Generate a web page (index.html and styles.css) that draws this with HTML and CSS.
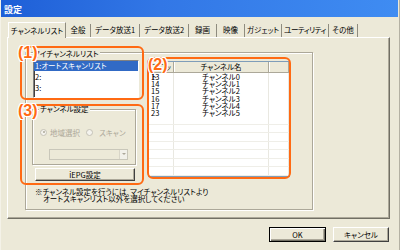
FILE: index.html
```html
<!DOCTYPE html>
<html lang="ja">
<head>
    <meta charset="UTF-8">
    <title>設定</title>
    <link rel="stylesheet" href="styles.css">
</head>
<body>
<div class="window">
    <div class="titlebar">設定</div>

    <!--タブ-->
    <div class="tabs">
        <div class="tab on t1">チャンネルリスト</div>
        <div class="tab t2">全般</div>
        <div class="tab t3">データ放送1</div>
        <div class="tab t3">データ放送2</div>
        <div class="tab t4">録画</div>
        <div class="tab t4">映像</div>
        <div class="tab t5">ガジェット</div>
        <div class="tab t6">ユーティリティ</div>
        <div class="tab t7">その他</div>
    </div>

    <!--タブの中身-->
    <div class="page">
        <div class="frame">
            <div class="left">
                <div class="head">
                    <span class="head-text">マイチャンネルリスト</span>
                    <span class="rule"></span>
                </div>
                <ul class="listbox">
                    <li class="sel">1:オートスキャンリスト</li>
                    <li>2:</li>
                    <li>3:</li>
                </ul>

                <div class="group">
                    <span class="legend">チャンネル設定</span>
                    <div class="radios">
                        <span class="radio checked"></span><span class="radio-label">地域選択</span>
                        <span class="radio r2"></span><span class="radio-label">スキャン</span>
                    </div>
                    <div class="combo"><span class="combo-btn"></span></div>
                </div>

                <div class="btn iepg">iEPG設定</div>

                <p class="note">※チャンネル設定を行うには、マイチャンネルリストより<br>オートスキャンリスト以外を選択してください</p>
            </div>

            <div class="listview">
                <div class="lv-head">
                    <span class="c1">スロット</span>
                    <span class="c2">チャンネル名</span>
                    <span class="c3"></span>
                </div>
                <div class="lv-body">
                    <div class="row"><span class="c1">13</span><span class="c2">チャンネル0</span><span class="c3"></span></div>
                    <div class="row"><span class="c1">14</span><span class="c2">チャンネル1</span><span class="c3"></span></div>
                    <div class="row"><span class="c1">15</span><span class="c2">チャンネル2</span><span class="c3"></span></div>
                    <div class="row"><span class="c1">16</span><span class="c2">チャンネル3</span><span class="c3"></span></div>
                    <div class="row"><span class="c1">17</span><span class="c2">チャンネル4</span><span class="c3"></span></div>
                    <div class="row"><span class="c1">23</span><span class="c2">チャンネル5</span><span class="c3"></span></div>
                    <div class="row"><span class="c1"></span><span class="c2"></span><span class="c3"></span></div>
                    <div class="row"><span class="c1"></span><span class="c2"></span><span class="c3"></span></div>
                    <div class="row"><span class="c1"></span><span class="c2"></span><span class="c3"></span></div>
                    <div class="row"><span class="c1"></span><span class="c2"></span><span class="c3"></span></div>
                    <div class="row"><span class="c1"></span><span class="c2"></span><span class="c3"></span></div>
                    <div class="row"><span class="c1"></span><span class="c2"></span><span class="c3"></span></div>
                    <div class="row"><span class="c1"></span><span class="c2"></span><span class="c3"></span></div>
                    <div class="row"><span class="c1"></span><span class="c2"></span><span class="c3"></span></div>
                </div>
            </div>
        </div>
    </div>

    <!--下のボタン-->
    <div class="buttons">
        <div class="btn default">OK</div>
        <div class="btn">キャンセル</div>
    </div>

    <!--注釈（オレンジの枠）-->
    <div class="mark box1"></div>
    <div class="mark box2"></div>
    <div class="mark box3"></div>
    <span class="num n1">(1)</span>
    <span class="num n2">(2)</span>
    <span class="num n3">(3)</span>
</div>
</body>
</html>
```

FILE: styles.css
```css
*{
    box-sizing: border-box;
}
body{
    margin: 0;
    font-family: "Noto Sans CJK JP", sans-serif;
    font-size: 7.5px;
    font-feature-settings: "palt";
    color: #000;
}
.window{
    position: relative;
    width: 400px;
    height: 250px;
    background: #ece9d8;
    border-right: 1px solid #b4b1a3;
    border-left: 1px solid #f4f2e8;
    overflow: hidden;
}
.titlebar{
    height: 17px;
    padding: 3px 0 0 3px;
    line-height: 14px;
    font-size: 9px;
    font-weight: bold;
    color: #fff;
    background: linear-gradient(90deg, #1e5fd7, #3277e6 40%, #3f8cf2);
    margin-right: 1px;
}

/* タブ */
.tabs{
    display: flex;
    align-items: flex-end;
    height: 20px;
    margin-left: 7px;
}
.tab{
    height: 13px;
    line-height: 12px;
    text-align: center;
    border-right: 1px solid #8f8c7f;
    white-space: nowrap;
}
.tab.on{
    height: 16px;
    line-height: 15px;
    border: 1px solid #fff;
    border-right: 1px solid #8f8c7f;
    border-bottom: none;
    background: #ece9d8;
    margin-bottom: -1px;
    position: relative;
    z-index: 1;
}
.t1{ width: 58px; }
.t2{ width: 25px; }
.t3{ width: 49px; }
.t4{ width: 28px; }
.t5{ width: 37px; }
.t6{ width: 47px; letter-spacing: -0.5px; }
.t7{ width: 29px; }

.page{
    width: 383px;
    height: 182px;
    margin-left: 6px;
    border: 1px solid #fff;
    border-right-color: #716f64;
    border-bottom-color: #716f64;
    box-shadow: inset -1px -1px 0 #aca899;
    padding: 14px 0 0 17px;
}
.frame{
    display: flex;
    gap: 7px;
    width: 288px;
    height: 158px;
    border: 1px solid #aca899;
    box-shadow: inset 1px 1px 0 #fff, 1px 1px 0 #fff;
    padding-left: 5px;
}
.left{
    width: 110px;
}

/* マイチャンネルリスト */
.head{
    display: flex;
    align-items: center;
    height: 8px;
    margin-top: -4px;
    padding-left: 2px;
}
.head-text{
    padding-right: 1px;
    background: #ece9d8;
}
.rule{
    flex: 1;
    height: 2px;
    border-top: 1px solid #aca899;
    border-bottom: 1px solid #fff;
}
.listbox{
    list-style: none;
    margin: 3px 0 0 2px;
    padding: 0;
    width: 106px;
    height: 38px;
    background: #fff;
    border: 1px solid #fff;
    border-left-color: #808080;
    border-top-color: #808080;
    box-shadow: inset 1px 1px 0 #404040;
}
.listbox li{
    height: 11px;
    line-height: 11px;
    padding-left: 1px;
}
.listbox li.sel{
    height: 10px;
    line-height: 10px;
    background: #316ac5;
    color: #fff;
}

/* チャンネル設定 */
.group{
    width: 104px;
    height: 56px;
    margin: 11px 0 0 1px;
    border: 1px solid #aca899;
    box-shadow: inset 1px 1px 0 #fff, 1px 1px 0 #fff;
    padding: 0 0 0 6px;
}
.legend{
    display: inline-block;
    height: 8px;
    line-height: 8px;
    margin-top: -5px;
    padding: 0 1px;
    background: #ece9d8;
    vertical-align: top;
}
.radios{
    display: flex;
    align-items: center;
    height: 8px;
    margin-top: 7px;
    padding-left: 1px;
    color: #aca899;
}
.radio{
    width: 7px;
    height: 7px;
    border-radius: 50%;
    border: 1px solid #c4c2b6;
    background: #f4f3ee;
    position: relative;
}
.radio.checked::after{
    content: "";
    position: absolute;
    left: 1.5px;
    top: 1.5px;
    width: 2px;
    height: 2px;
    border-radius: 50%;
    background: #aca899;
}
.radio-label{
    margin-left: 3px;
    margin-right: 7px;
}
.r2{
    margin-left: -1px;
}
.radio.r2 + .radio-label{
    margin-left: 6px;
}
.combo{
    position: relative;
    width: 79px;
    height: 11px;
    margin: 13px 0 0 10px;
    border: 1px solid #c9c7ba;
    background: #ece9d8;
}
.combo-btn{
    position: absolute;
    right: 0;
    top: 0;
    width: 8px;
    height: 9px;
    border-left: 1px solid #d8d5c8;
    background: #f2f1ea;
}
.combo-btn::after{
    content: "";
    position: absolute;
    left: 2px;
    top: 3px;
    border-left: 2px solid transparent;
    border-right: 2px solid transparent;
    border-top: 2px solid #aca899;
}

/* ボタン */
.btn{
    height: 13px;
    line-height: 11px;
    text-align: center;
    background: #ece9d8;
    border: 1px solid #fff;
    border-right-color: #404040;
    border-bottom-color: #404040;
    box-shadow: inset -1px -1px 0 #aca899;
}
.iepg{
    width: 100px;
    margin: 3px 0 0 4px;
}
.note{
    margin: 7px 0 0 0;
    padding-left: 12px;
    text-indent: -8px;
    line-height: 7.3px;
    white-space: nowrap;
}

/* リストビュー */
.listview{
    width: 142px;
    height: 116px;
    margin-top: 8px;
    background: #fff;
    border: 1px solid #7f9db9;
    overflow: hidden;
}
.lv-head{
    display: flex;
    height: 11px;
    line-height: 10px;
    background: #ece9d8;
    border-bottom: 1px solid #aca899;
}
.lv-head span{
    border-right: 1px solid #aca899;
    box-shadow: 1px 0 0 #fff;
}
.c1{
    width: 25px;
    padding-left: 2px;
}
.c2{
    width: 95px;
    text-align: center;
}
.c3{
    flex: 1;
}
.row{
    display: flex;
    height: 7.2px;
    line-height: 7.2px;
}
.row span{
    border-right: 1px solid #e9e8e1;
}
.row:nth-child(n+7){
    height: 8.5px;
    border-bottom: 1px solid #efeee8;
}

.buttons{
    display: flex;
    justify-content: flex-end;
    gap: 7px;
    margin: 8px 10px 0 0;
}
.buttons .btn{
    width: 56px;
    height: 15px;
    line-height: 13px;
}
.buttons .default{
    width: 57px;
    border: 1px solid #000;
    box-shadow: inset 1px 1px 0 #fff, inset -1px -1px 0 #716f64, inset -2px -2px 0 #aca899;
}

/* 注釈 */
.mark{
    position: absolute;
    border: 2px solid #ff6a13;
    border-radius: 6px;
}
.box1{ left: 19px; top: 46px; width: 124px; height: 54px; }
.box2{ left: 146px; top: 57px; width: 144px; height: 122px; }
.box3{ left: 19px; top: 104px; width: 124px; height: 81px; }
.num{
    position: absolute;
    font-family: "Liberation Sans", sans-serif;
    font-size: 16px;
    font-weight: bold;
    line-height: 17px;
    color: #ff6a13;
    text-shadow: 1px 0 0 #fff, -1px 0 0 #fff, 0 1px 0 #fff, 0 -1px 0 #fff,
                 1px 1px 0 #fff, -1px -1px 0 #fff, 1px -1px 0 #fff, -1px 1px 0 #fff;
}
.n1{ left: 17px; top: 44px; }
.n2{ left: 147px; top: 56px; }
.n3{ left: 17px; top: 102px; }
```
